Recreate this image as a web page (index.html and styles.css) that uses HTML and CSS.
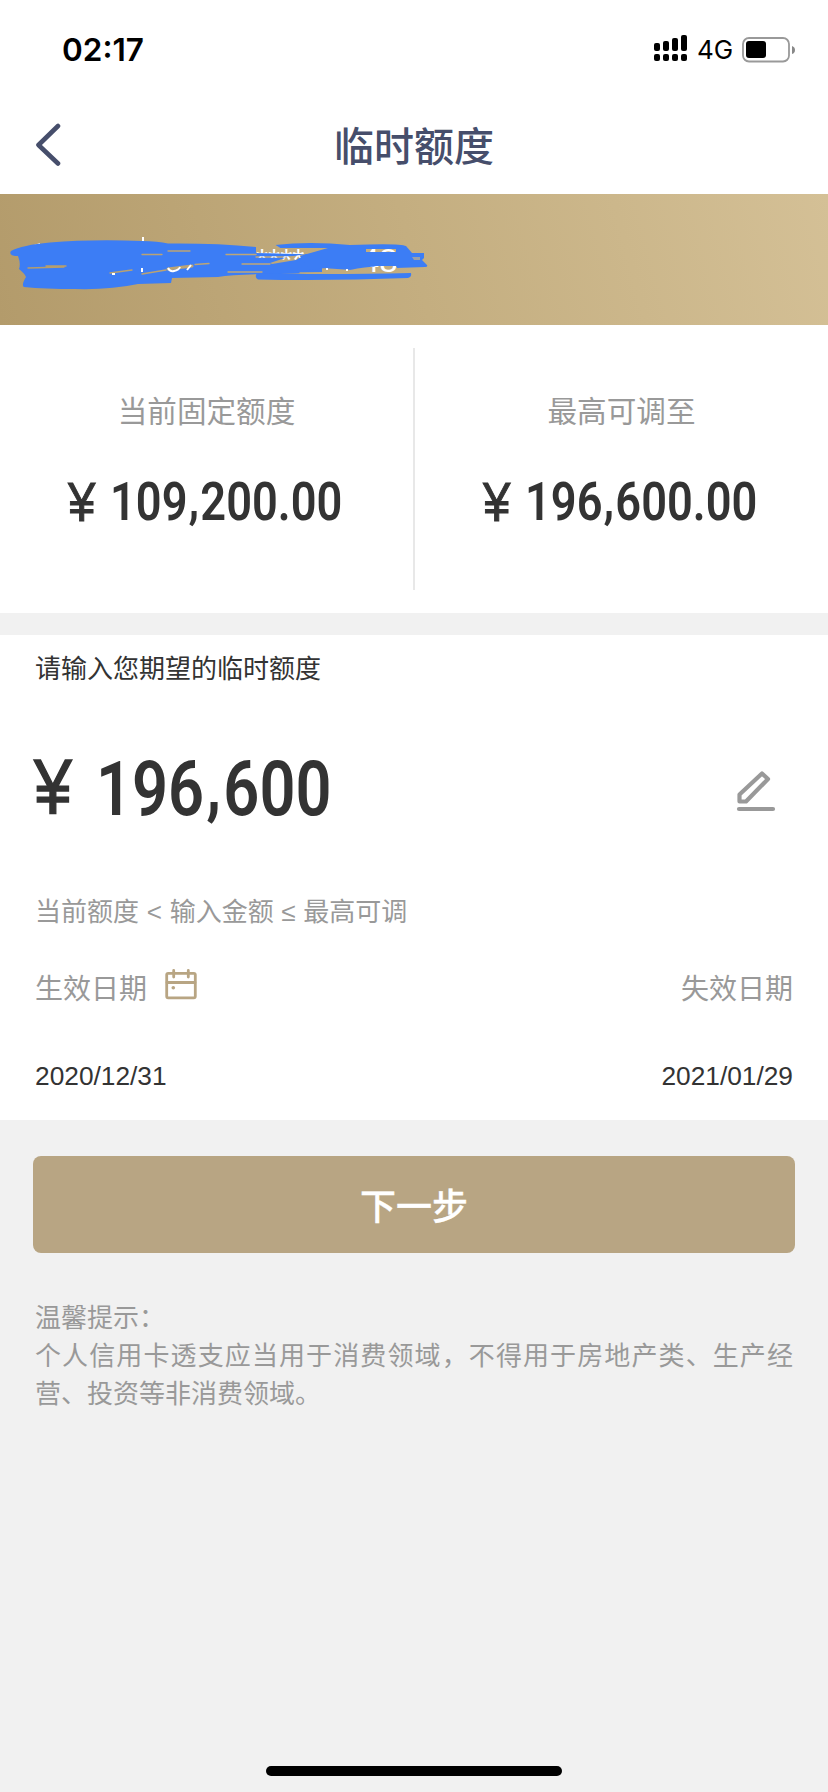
FILE: index.html
```html
<!DOCTYPE html>
<html lang="zh-CN">
<head>
<meta charset="utf-8">
<title>临时额度</title>
<link rel="stylesheet" href="styles.css">
</head>
<body>
<header class="top">
  <div class="status">
    <span class="time">02:17</span>
    <div class="status-right">
      <svg class="signal" width="34" height="28" viewBox="0 0 34 28">
        <rect x="0" y="8" width="6" height="8" rx="2"/><rect x="9" y="6" width="6" height="10" rx="2"/><rect x="18" y="3" width="6" height="13" rx="2"/><rect x="27" y="0" width="6" height="16" rx="2"/>
        <rect x="0" y="19" width="6" height="7" rx="2"/><rect x="9" y="19" width="6" height="7" rx="2"/><rect x="18" y="19" width="6" height="7" rx="2"/><rect x="27" y="19" width="6" height="7" rx="2"/>
      </svg>
      <span class="net">4G</span>
      <svg class="battery" width="53" height="26" viewBox="0 0 53 26">
        <rect x="1" y="1" width="46" height="23.500" rx="6" fill="#fff" stroke="#999" stroke-width="1.800"/>
        <rect x="4" y="4" width="20" height="17" rx="3" fill="#000"/>
        <path d="M50 9 Q53 10 53 13 Q53 16 50 17Z" fill="#888"/>
      </svg>
    </div>
  </div>
  <div class="nav">
    <svg class="back" width="26" height="44" viewBox="0 0 26 44"><path d="M23 3 L3.500 22 L23 40.500" fill="none" stroke="#464e6b" stroke-width="4.600" stroke-linecap="round" stroke-linejoin="round"/></svg>
    <h1 class="title">临时额度</h1>
  </div>
</header>
<section class="banner">
  <span class="mask">****</span>
  <span class="tail">48</span>
  <svg class="scribble" width="460" height="131" viewBox="0 0 460 131">
    <defs>
      <mask id="gaps" maskUnits="userSpaceOnUse" x="0" y="0" width="460" height="131">
        <rect width="460" height="131" fill="#fff"/>
        <path d="M256 50L274 50L282 55L325 57L328 59L304 60L256 59ZM366 55L396 55L396 58L366 58ZM366 76L376 72L396 72L400 79L366 80ZM270 69L288 63L306 60L296 66L272 70ZM322 74L352 76L350 79L322 79Z" fill="#000"/>
        <g fill="none" stroke="#000" stroke-linecap="round" stroke-width="1.300">
          <path d="M142 60.500h20M168 57h22M226 60.500h30M195 70.500l14-1M242 70h28M256 63h44M28 74l36-1M46 72h20M228 78h34M300 79h26"/>
          <path d="M110 79l22-3M142 80l24-4"/>
          <path d="M168 75l24-3" stroke-width="3"/>
        </g>
      </mask>
    </defs>
    <g fill="#fff"><rect x="142" y="43" width="2" height="6"/><path d="M34 51l6-2v2z"/></g>
    <g fill="#3c7df5">
      <path mask="url(#gaps)" d="M11 57 Q22 51 50 48.500 Q92 45 142 47 Q158 47 168 49.500 Q215 49 257 53 L257 57 Q265 60 330 60 L366 61 L366 54 L275 54 L275 51 Q310 47 350 51 Q400 49 406 52 L412 59 L424 59 L424 64 L422 66 L427 71 Q428 73 425 73 L396 74 Q375 70 350 76 Q310 79 280 80 Q235 80 218 83 L172 84 L171 89 L138 90 Q110 96 75 95 Q45 95 24 93 Q21 91 26 83 Q25 80 19 75 Q21 70 18 62 Q8 62 11 57Z"/>
      <path d="M328 54H366V72H340L310 76L300 62Z"/>
      <path d="M257 79 Q320 81 411 79 Q412 83 408 84 Q330 87 258 85.500 Q254 83 257 79Z"/>
    </g>
    <path d="M168 74q2 4 6 3q5-1 6-4M187 76l4-5M326 75h2M346 76h2M112 80h3M142 74v4" fill="none" stroke="#fff" stroke-width="2"/>
    <path d="M412 63h8v3h-6z" fill="#9aa0a8"/>
  </svg>
</section>
<section class="limits">
  <div class="limit">
    <p class="label">当前固定额度</p>
    <p class="money"><span class="yen">¥</span><span class="din">109<i>,</i>200<b>.</b>00</span></p>
  </div>
  <div class="rule"></div>
  <div class="limit">
    <p class="label">最高可调至</p>
    <p class="money"><span class="yen">¥</span><span class="din">196<i>,</i>600<b>.</b>00</span></p>
  </div>
</section>
<main class="form">
  <p class="prompt">请输入您期望的临时额度</p>
  <div class="amount">
    <p class="money big"><span class="yen">¥</span><span class="din">196<i>,</i>600</span></p>
    <svg class="edit" width="40" height="42" viewBox="0 0 40 42" fill="none" stroke="#999" stroke-linejoin="round" stroke-linecap="round"><path d="M3.500 24.500 L26 3.500 L32 9 L10 31.500 H3.500Z" stroke-width="4.200"/><path d="M3 39H37" stroke-width="4.200"/></svg>
  </div>
  <p class="range">当前额度 &lt; 输入金额 ≤ 最高可调</p>
  <div class="row labels">
    <span class="start">生效日期
      <svg class="cal" width="32" height="31" viewBox="0 0 32 31" fill="none" stroke="#b8a583" stroke-width="2.800"><rect x="1.700" y="4.300" width="28.600" height="24.500" rx="1.500"/><path d="M2 13.500H30M8.700 1.500V8M23.300 1.500V8" stroke-linecap="round"/><circle cx="8.300" cy="18.700" r="1.800" fill="#b8a583" stroke="none"/></svg>
    </span>
    <span>失效日期</span>
  </div>
  <div class="row dates"><span>2020/12/31</span><span>2021/01/29</span></div>
</main>
<button class="next">下一步</button>
<section class="tips">
  <p>温馨提示：</p>
  <p class="justify">个人信用卡透支应当用于消费领域，不得用于房地产类、生产经营、投资等非消费领域。</p>
</section>
<div class="home"></div>
</body>
</html>
```
FILE: styles.css
```css
* { box-sizing: border-box; }
body {
  margin: 0;
  width: 828px;
  height: 1792px;
  overflow: hidden;
  display: flex;
  flex-direction: column;
  background: #f1f1f1;
  color: #333;
  font-family: "Liberation Sans", "Noto Sans CJK SC", sans-serif;
}
p, h1 { margin: 0; font-weight: 400; }
svg { display: block; flex: none; }
.top { height: 194px; flex: none; background: #fff; }
.status { height: 98px; display: flex; justify-content: space-between; padding: 30px 33px 0 62px; }
.time { font: 600 31.500px/40px Inter, sans-serif; color: #000; }
.status-right { display: flex; align-items: flex-start; }
.signal { margin-top: 5px; }
.net { width: 45px; margin-left: 9px; font: 400 26px/40px Inter, sans-serif; color: #000; }
.battery { margin-top: 7px; }
.nav { height: 96px; display: flex; align-items: center; padding: 0 36px 3px 35px; }
.title { flex: 1; margin: 4px 25px 0 0; text-align: center; color: #464e6b; font-size: 40px; line-height: 60px; font-weight: 500; }
.banner { position: relative; height: 131px; flex: none; background: linear-gradient(75deg, #b39b6b, #c4ae80 50%, #d4c096); }
.scribble { position: absolute; left: 0; top: 0; }
.mask, .tail { position: absolute; color: #fff; line-height: 32px; }
.mask { left: 256px; top: 51px; font-size: 31px; }
.tail { left: 361px; top: 51px; font-size: 33px; }
.limits { height: 288px; flex: none; display: flex; background: #fff; padding-top: 23px; }
.limit { flex: 1; text-align: center; padding-top: 42px; }
.rule { width: 2px; height: 242px; background: #e8e8e8; }
.label { font-size: 29.600px; line-height: 44px; color: #999; }
.money { display: flex; justify-content: flex-start; white-space: nowrap; font-family: Roboto, sans-serif; font-weight: 600; }
.limit .money { margin: 35px 0 0 68px; line-height: 66px; font-size: 54px; }
.yen { width: 42px; font-family: "Liberation Sans", sans-serif; font-size: 56px; font-weight: 400; text-align: left; transform: scaleX(.88); transform-origin: 0 0; -webkit-text-stroke: 1px #333; }
.din { transform: scaleX(.837); transform-origin: 0 0; }
.din i, .din b { display: inline-block; width: .285em; font-style: normal; font-weight: inherit; text-align: center; }
.din i { transform: translateY(-.05em); }
.form { height: 485px; flex: none; margin-top: 22px; background: #fff; padding: 0 36px; }
.prompt { font-size: 26px; line-height: 40px; padding-top: 14px; margin-left: -1px; }
.amount { height: 171px; display: flex; justify-content: space-between; }
.big { font-size: 76px; line-height: 90px; margin: 55px 0 0 -2px; }
.big .yen { width: 62px; font-size: 78px; transform: translateY(-2px) scaleX(.87); -webkit-text-stroke: 1.5px #333; }
.big .din { transform: scaleX(.83); }
.big .din i { width: .305em; }
.edit { margin: 81px 16px 0 0; }
.range { font-size: 26px; line-height: 40px; margin: 32px 0 0 -1px; color: #999; word-spacing: .5px; }
.row { display: flex; justify-content: space-between; }
.labels { margin: 37px -1px 0; font-size: 28px; line-height: 42px; color: #999; }
.start { display: flex; gap: 18px; }
.dates { margin: 47px -1px 0; font-size: 26.300px; line-height: 36px; }
.next { width: 762px; height: 97px; flex: none; margin: 36px 0 0 33px; padding: 0; border: 0; border-radius: 8px; background: #b8a583; color: #fff; font: 500 36px/95px "Noto Sans CJK SC", sans-serif; -webkit-text-stroke: .3px #fff; }
.tips { margin: 46px 35px 0; font-size: 26px; line-height: 38px; color: #999; }
.justify { text-align: justify; }
.home { width: 296px; height: 10px; border-radius: 5px; background: #000; margin: auto auto 16px; }
```
